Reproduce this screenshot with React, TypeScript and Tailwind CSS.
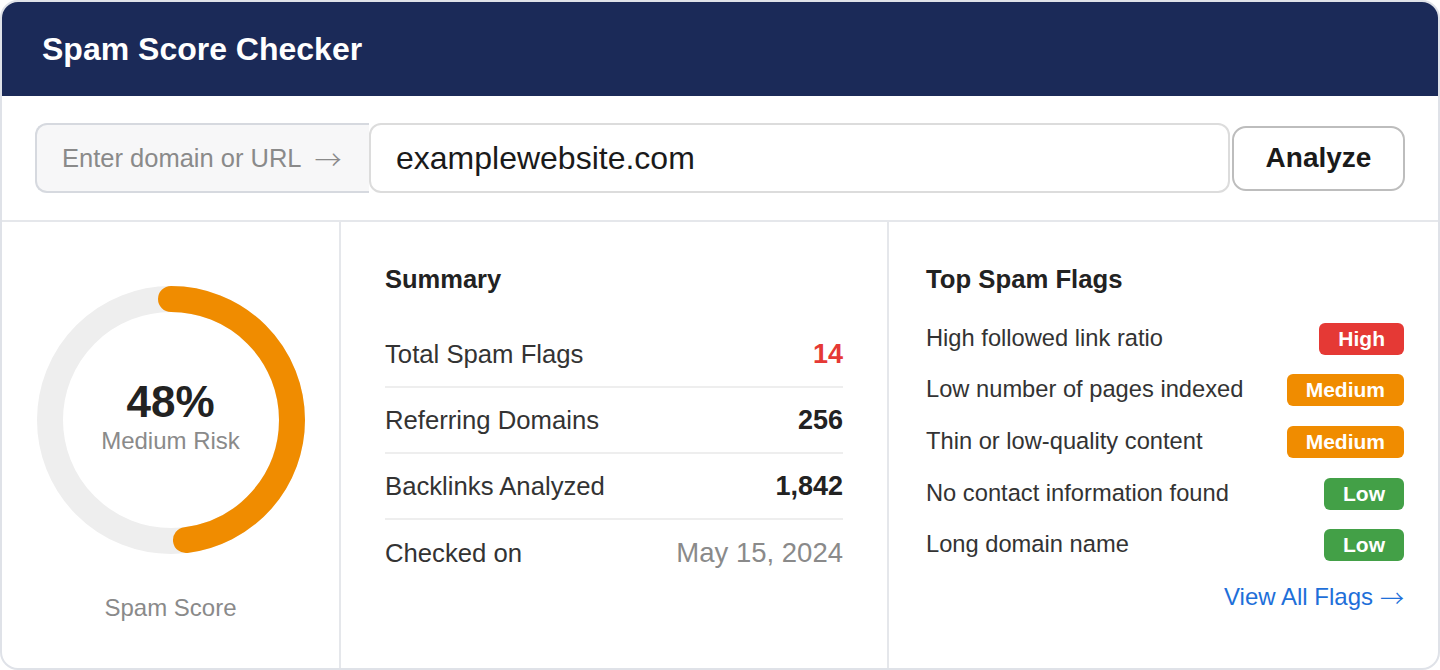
const summaryRows = [
  { label: "Total Spam Flags", value: "14", cls: "text-[#e53935] font-bold text-[27px]" },
  { label: "Referring Domains", value: "256", cls: "text-[#222] font-bold text-[27px]" },
  { label: "Backlinks Analyzed", value: "1,842", cls: "text-[#222] font-bold text-[27px]" },
  { label: "Checked on", value: "May 15, 2024", cls: "text-[#8a8a8a] text-[27.5px]" },
];

const flags = [
  { label: "High followed link ratio", level: "High" },
  { label: "Low number of pages indexed", level: "Medium" },
  { label: "Thin or low-quality content", level: "Medium" },
  { label: "No contact information found", level: "Low" },
  { label: "Long domain name", level: "Low" },
];

const badgeColor: { [key: string]: string } = {
  High: "bg-[#e53935]",
  Medium: "bg-[#f08c00]",
  Low: "bg-[#43a047]",
};

function Arrow({ className = "" }: { className?: string }) {
  return <span className={`font-['Noto_Sans_CJK_SC'] font-light leading-none ${className}`}>→</span>;
}

function Donut({ percent }: { percent: number }) {
  const r = 121;
  const c = 2 * Math.PI * r;
  return (
    <div className="relative w-[268px] h-[268px]">
      <svg width="268" height="268" viewBox="0 0 268 268">
        <circle cx="134" cy="134" r={r} fill="none" stroke="#eeeeee" strokeWidth="26" />
        <circle
          cx="134"
          cy="134"
          r={r}
          fill="none"
          stroke="#f08c00"
          strokeWidth="26"
          strokeLinecap="round"
          strokeDasharray={`${(c * percent) / 100} ${c}`}
          transform="rotate(-90 134 134)"
        />
      </svg>
      <div className="absolute inset-0 flex flex-col items-center justify-center pb-[8px]">
        <span className="text-[44px] font-bold text-[#222] leading-[50px]">{percent}%</span>
        <span className="text-[24px] text-[#8a8a8a] leading-[28px]">Medium Risk</span>
      </div>
    </div>
  );
}

export default function App() {
  return (
    <div className="w-[1440px] h-[670px] bg-white" style={{ fontFamily: '"Liberation Sans", Arial, sans-serif' }}>
      <div className="h-full border-2 border-[#dfe2e8] rounded-[18px] overflow-hidden flex flex-col">
        <div className="h-[94px] bg-[#1b2a58] px-[40px] flex items-center">
          <h1 className="text-[32px] font-bold text-white">Spam Score Checker</h1>
        </div>

        <div className="flex items-center px-[33px] py-[27px] border-b-2 border-[#e5e7eb]">
          <div className="w-[334px] h-[70px] bg-[#f7f7f8] border-2 border-r-0 border-[#d6d9df] rounded-l-[12px] flex items-center pl-[25px] text-[25.5px] text-[#8a8a8a]">
            <span>Enter domain or URL</span>
            <Arrow className="ml-[13px] text-[27px]" />
          </div>
          <div className="flex-1 h-[70px] border-2 border-[#dcdcdc] rounded-[12px] flex items-center pl-[25px] text-[32px] text-[#1a1a1a]">
            examplewebsite.com
          </div>
          <button className="ml-[2px] w-[173px] h-[65px] border-2 border-[#bdbdbd] rounded-[14px] bg-white text-[28px] font-bold text-[#1a1a1a]">
            Analyze
          </button>
        </div>

        <div className="flex flex-1">
          <div className="w-[339px] border-r-2 border-[#e5e7eb] flex flex-col items-center pt-[64px]">
            <Donut percent={48} />
            <span className="mt-[36px] text-[24px] text-[#8a8a8a]">Spam Score</span>
          </div>

          <div className="w-[548px] border-r-2 border-[#e5e7eb] px-[44px] pt-[42px]">
            <h2 className="text-[25.5px] font-bold text-[#222] leading-[30px]">Summary</h2>
            <div className="mt-[28px]">
              {summaryRows.map((row, i) => (
                <div
                  key={row.label}
                  className={`h-[66px] flex items-center justify-between ${i < summaryRows.length - 1 ? "border-b-2 border-[#eeeeee]" : ""}`}
                >
                  <span className="text-[25.7px] text-[#333]">{row.label}</span>
                  <span className={row.cls}>{row.value}</span>
                </div>
              ))}
            </div>
          </div>

          <div className="flex-1 pl-[37px] pr-[34px] pt-[42px]">
            <h2 className="text-[25.7px] font-bold text-[#222] leading-[30px]">Top Spam Flags</h2>
            <div className="mt-[20px]">
              {flags.map((f, i) => (
                <div key={f.label} className={`flex items-center justify-between ${i === 0 || i === 4 ? "h-[50px]" : "h-[52px]"}`}>
                  <span className="text-[23.7px] text-[#333]">{f.label}</span>
                  <span className={`${badgeColor[f.level]} h-[32px] px-[19px] rounded-[6px] flex items-center text-[21px] font-bold text-white`}>
                    {f.level}
                  </span>
                </div>
              ))}
            </div>
            <div className="flex justify-end mt-[13px]">
              <a className="flex items-center h-[28px] text-[24px] text-[#1e6fd9] cursor-pointer">
                <span>View All Flags</span>
                <Arrow className="ml-[7px]" />
              </a>
            </div>
          </div>
        </div>
      </div>
    </div>
  );
}
